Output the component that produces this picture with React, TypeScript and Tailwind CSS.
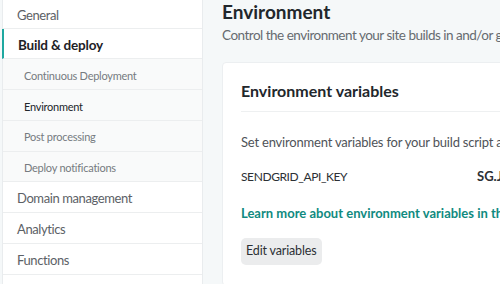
import React from "react";

const subItems = [
  { label: "Continuous Deployment", active: false },
  { label: "Environment", active: true },
  { label: "Post processing", active: false },
  { label: "Deploy notifications", active: false },
];

const topItems = ["Domain management", "Analytics", "Functions"];

const App = () => {
  return (
    <div
      className="w-[500px] h-[284px] overflow-hidden flex bg-[#f5f8f9]"
      style={{ fontFamily: 'Lato, "Open Sans", sans-serif' }}
    >
      {/* Sidebar */}
      <div className="ml-[2px] w-[201px] shrink-0 bg-white border-x border-[#e9ecee] flex flex-col">
        <div className="h-[28.5px] shrink-0 flex items-center pt-[4px] pl-[14px] border-b border-[#eceeef] text-[13px] tracking-[-0.4px] text-[#5c6166]">
          General
        </div>
        <div className="h-[30.75px] shrink-0 flex items-center pt-[4px] pl-[14px] border-b border-[#eceeef] border-l-2 border-l-[#1ea8a0] -ml-px text-[13.5px] tracking-[-0.2px] font-bold text-[#1d2126]">
          Build &amp; deploy
        </div>
        {subItems.map((s) => (
          <div
            key={s.label}
            className={`h-[30.75px] shrink-0 flex items-center pt-[4px] pl-[21px] border-b border-[#eceeef] bg-[#f9fafa] text-[11px] tracking-[-0.25px] ${
              s.active ? "text-[#22262a]" : "text-[#767b80]"
            }`}
          >
            {s.label}
          </div>
        ))}
        {topItems.map((t) => (
          <div
            key={t}
            className="h-[30.75px] shrink-0 flex items-center pt-[4px] pl-[14px] border-b border-[#eceeef] text-[13px] tracking-[-0.4px] text-[#5c6166]"
          >
            {t}
          </div>
        ))}
        <div className="h-[30px] shrink-0" />
      </div>

      {/* Main */}
      <div className="flex-1 min-w-0 pl-[19px]">
        <h1 className="text-[19px] leading-[24px] font-bold text-[#22272c] whitespace-nowrap">
          Environment
        </h1>
        <p className="mt-[1px] text-[13.5px] tracking-[-0.5px] leading-[20px] text-[#666b70] whitespace-nowrap">
          Control the environment your site builds in and/or gets deployed to.
        </p>
        <div className="mt-[17px] w-[320px] bg-white border border-[#eceff1] rounded-[4px] pl-[18px] pt-[16px] pb-[20px]">
          <h2 className="text-[16px] leading-[24px] font-bold text-[#22272c] whitespace-nowrap">
            Environment variables
          </h2>
          <div className="mt-[8px] h-px bg-[#eef0f1]" />
          <p className="mt-[20px] text-[13px] tracking-[-0.2px] leading-[20px] text-[#4f5358] whitespace-nowrap">
            Set environment variables for your build script and add-ons.
          </p>
          <div className="mt-[14px] flex items-baseline text-[13px] leading-[20px] text-[#2c3035] whitespace-nowrap">
            <span className="w-[236px] text-[12px] tracking-[-0.4px]">SENDGRID_API_KEY</span>
            <span className="font-bold">SG.J7xk2</span>
          </div>
          <a className="block mt-[16px] text-[13px] leading-[20px] font-bold text-[#108a80] whitespace-nowrap">
            Learn more about environment variables in the docs
          </a>
          <button className="mt-[15px] h-[27px] px-[5px] rounded-[5px] bg-[#ebeced] text-[12.5px] tracking-[-0.15px] text-[#2c3035]">
            Edit variables
          </button>
        </div>
      </div>
    </div>
  );
};

export default App;
